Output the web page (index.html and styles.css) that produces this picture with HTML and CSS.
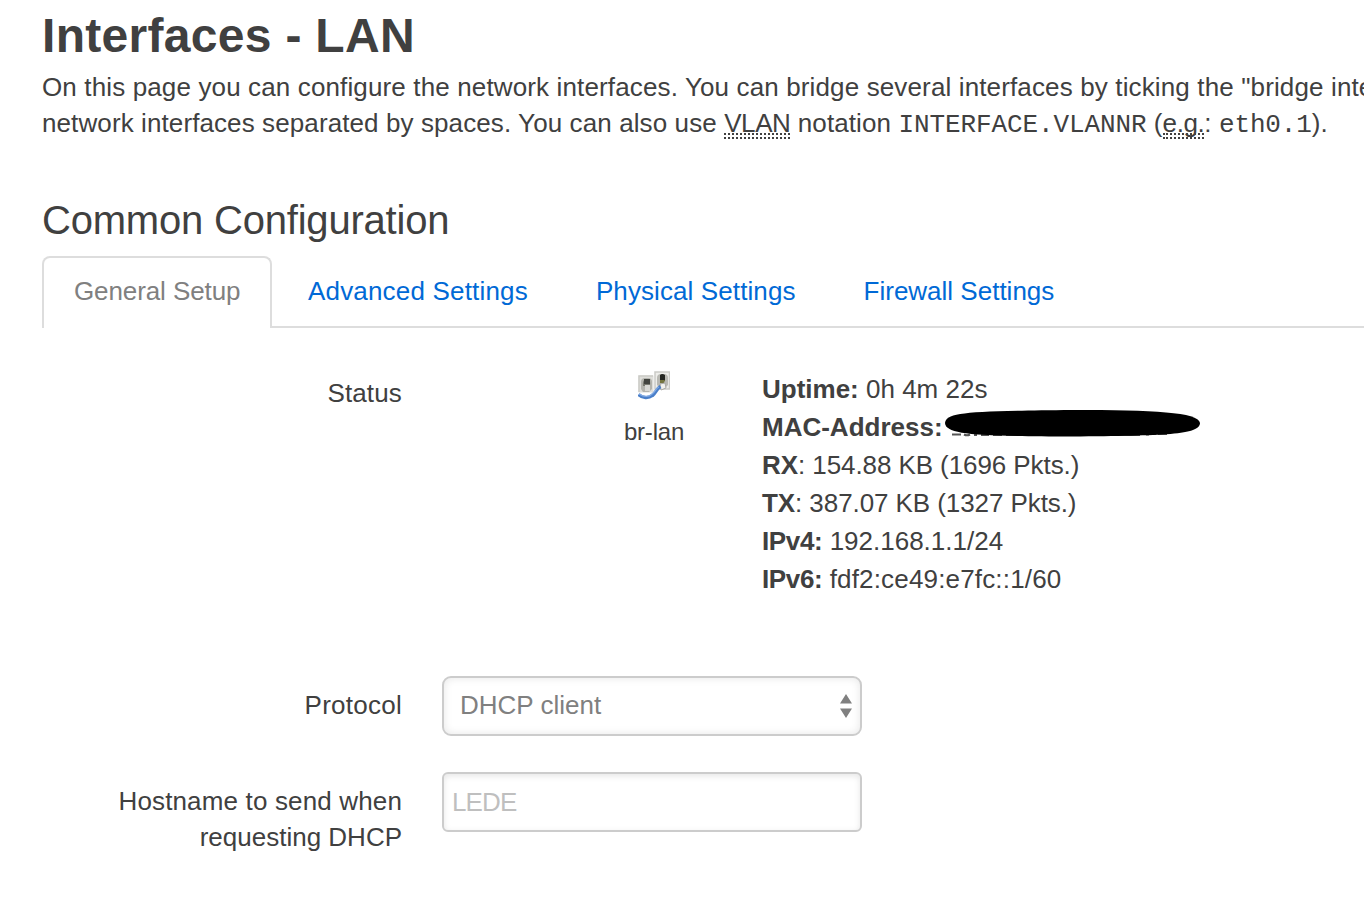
FILE: index.html
```html
<!DOCTYPE html>
<html lang="en">
<head>
<meta charset="utf-8">
<title>Interfaces - LAN</title>
<link rel="stylesheet" href="styles.css">
</head>
<body>
<main class="page">
  <h2 class="title"><span class="t-title">Interfaces - LAN</span></h2>
  <div class="description">
    <div><span class="t-d1">On this page you can configure the network interfaces. You can bridge several interfaces by ticking the "bridge inte</span></div>
    <div><span class="t-d2">network interfaces separated by spaces. You can also use <abbr>VLAN</abbr> notation <code>INTERFACE.VLANNR</code> (<abbr>e.g.</abbr>: <code class="port">eth0.1</code>).</span></div>
  </div>
  <h3 class="section"><span class="t-section">Common Configuration</span></h3>
  <nav class="tabs">
    <a class="tab active"><span class="t-tab1">General Setup</span></a>
    <a class="tab"><span class="t-tab2">Advanced Settings</span></a>
    <a class="tab"><span class="t-tab3">Physical Settings</span></a>
    <a class="tab"><span class="t-tab4">Firewall Settings</span></a>
  </nav>
  <section class="row status">
    <div class="label"><span class="t-status">Status</span></div>
    <div class="device">
      <svg class="bridge" viewBox="0 0 32 30">
        <rect x="0.500" y="4.500" width="15" height="17" fill="#dededa"/>
        <path d="M1 21V5h14" fill="none" stroke="#cbcbc6" stroke-width="1.500"/>
        <path d="M3 18V11q0-4 4-4h3q4 0 4 4v7l-3 3H5z" fill="#b4b4ae"/>
        <path d="M5 15q-1-7 4-7 4 0 3 7z" fill="#77786f"/>
        <path d="M6 8h6v5H6z" fill="#42443f"/>
        <path d="M7 14h5v6H7z" fill="#d8d8d4"/>
        <rect x="17" y="1" width="14.500" height="17" fill="#eeeeeb" stroke="#cbcbc7" stroke-width="1.500"/>
        <path d="M19 14V7q0-4 4-4h3q4 0 4 4v7l-3 3h-5z" fill="#b9b9b3"/>
        <path d="M22 4q2-2 5 0v6h-5z" fill="#242622"/>
        <path d="M22 9h5l-1 3h-4z" fill="#74753f"/>
        <path d="M22 13l5-1 1 5-5 2z" fill="#f2f2ef" stroke="#aaaaa6"/>
        <path d="M0.500 23.500c4 4 10 4 14 1 3-2 4-7 8-9" fill="none" stroke="#4a7fc9" stroke-width="3.400"/>
        <path d="M1 23c5 3 10 3 13 0 3-2 4-6 7-7" fill="none" stroke="#83abe4" stroke-width="1.300"/>
      </svg>
      <span class="t-br">br-lan</span>
    </div>
    <div class="stats">
      <div><span class="t-s1"><strong>Uptime:</strong> 0h 4m 22s</span></div>
      <div class="mac"><span class="t-s2"><strong>MAC-Address:</strong></span>
        <svg class="redaction" viewBox="0 0 258 30">
          <path d="M8 25.500h9M20 25.500q3 1.500 6 0M30 26h3M37 26h8M49 26h9M62 26h50M114 26h82M202 25.500h3M209 25h3M214 25h9" fill="none" stroke="#555" stroke-width="2"/>
          <path d="M1 14C2 3 25 2 128 1C210 1 254 3 256 14C256 26 220 26.500 128 27.500C32 27 2 26 1 14Z" fill="#000"/>
        </svg>
      </div>
      <div><span class="t-s3"><strong>RX</strong>: 154.88 KB (1696 Pkts.)</span></div>
      <div><span class="t-s4"><strong>TX</strong>: 387.07 KB (1327 Pkts.)</span></div>
      <div><span class="t-s5"><strong>IPv4:</strong> 192.168.1.1/24</span></div>
      <div><span class="t-s6"><strong>IPv6:</strong> <span class="t-v6">fdf2:ce49:e7fc::1/60</span></span></div>
    </div>
  </section>
  <section class="row protocol">
    <div class="label"><span class="t-proto">Protocol</span></div>
    <div class="field select"><span class="t-dhcp">DHCP client</span>
      <svg class="arrows" viewBox="0 0 12 24"><path d="M0 9.500L6 0l6 9.500zM0 14.500h12L6 24z" fill="#808080"/></svg>
    </div>
  </section>
  <section class="row hostname">
    <div class="label"><div><span class="t-h1">Hostname to send when</span></div><div><span class="t-h2">requesting DHCP</span></div></div>
    <div class="field input"><span class="t-lede">LEDE</span></div>
  </section>
</main>
</body>
</html>
```
FILE: styles.css
```css
* { box-sizing: border-box; }
body {
  margin: 0;
  height: 912px;
  overflow: hidden;
  background: #fff;
  color: #404040;
  font: 26px/36px "Liberation Sans", Arial, sans-serif;
}
.page { padding: 0 0 0 42px; overflow: hidden; }
span { white-space: nowrap; }
.title { margin: 0; font-size: 48px; line-height: 72px; height: 69px; }
.t-title { letter-spacing: .3px; }
.description { height: 115px; }
.t-d1 { letter-spacing: .135px; }
.t-d2 { letter-spacing: .1px; }
abbr { text-decoration: none; position: relative; letter-spacing: -.4px; }
abbr::after {
  content: "";
  position: absolute;
  left: 0;
  right: 0;
  bottom: -1px;
  height: 2px;
  border: 2px dotted #404040;
  border-width: 2px 0;
}
code { font: 26px/30px "Liberation Mono", "Courier New", monospace; letter-spacing: -.1px; }
.port { letter-spacing: -.15px; }
.section { margin: 0; font-weight: 400; font-size: 40px; line-height: 73px; height: 72px; }
.t-section { letter-spacing: -.2px; }
.tabs { display: flex; height: 72px; border-bottom: 2px solid #ddd; }
.tab { color: #0069d6; padding: 15px 30px 0; margin-right: 4px; height: 72px; border: 2px solid transparent; border-bottom: 0; }
.tab.active { color: #808080; background: #fff; border-color: #ddd; border-radius: 8px 8px 0 0; width: 230px; }
.t-tab1 { letter-spacing: -.1px; }
.t-tab2 { letter-spacing: .18px; }
.t-tab3 { letter-spacing: .1px; }
.row { display: flex; }
.label { width: 360px; text-align: right; flex: none; }
.status { padding-top: 42px; height: 348px; }
.status .label { padding-top: 5px; }
.t-status { letter-spacing: .15px; }
.device { width: 60px; margin-left: 222px; padding-top: 1px; display: flex; flex-direction: column; align-items: center; }
.bridge { width: 32px; height: 30px; margin-bottom: 13px; }
.t-br { font-size: 24px; letter-spacing: -.2px; }
.stats { margin-left: 78px; line-height: 38px; }
.mac { position: relative; height: 38px; }
.redaction { position: absolute; left: 182px; top: 1px; width: 258px; height: 30px; }
.t-s3, .t-s4 { letter-spacing: -.08px; }
.t-s5 strong, .t-s6 strong { letter-spacing: -.35px; }
.t-v6 { letter-spacing: .17px; }
.protocol { height: 96px; }
.protocol .label { padding-top: 11px; }
.hostname .label { padding-top: 11px; }
.t-proto { letter-spacing: .25px; }
.t-h1 { letter-spacing: .15px; }
.t-lede { letter-spacing: -.9px; }
.field { width: 420px; height: 60px; margin-left: 40px; border: 2px solid #ccc; box-shadow: inset 0 2px 6px rgba(0,0,0,.1); display: flex; align-items: center; }
.select { border-radius: 9px; padding: 0 8px 2px 16px; color: #808080; justify-content: space-between; box-shadow: inset 0 0 8px rgba(0,0,0,.1); }
.input { border-radius: 6px; padding-left: 8px; color: #bfbfbf; }
.arrows { width: 12px; height: 24px; margin-top: 2px; }
```
